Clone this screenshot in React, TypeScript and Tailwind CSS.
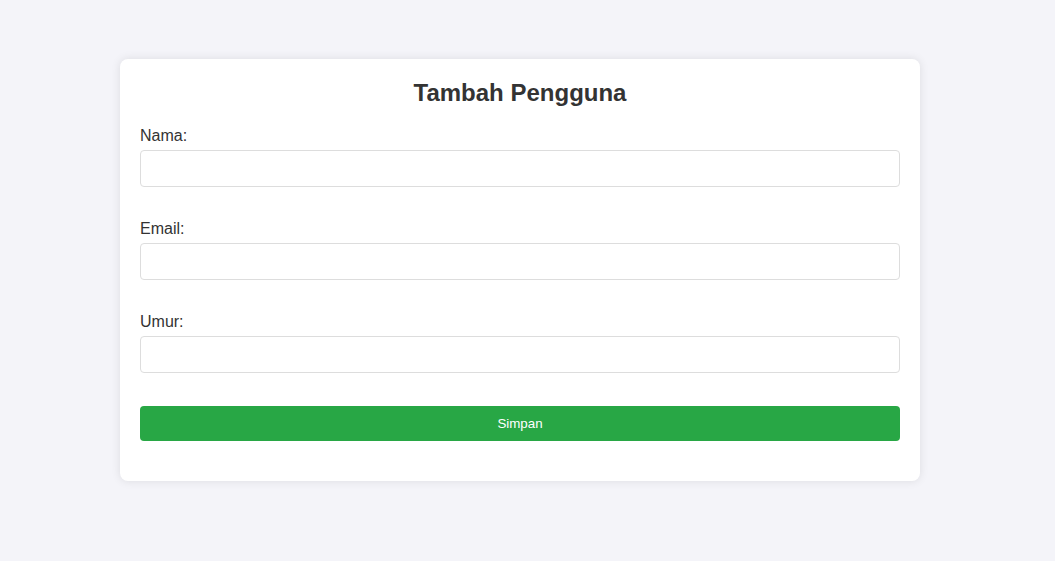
import React from "react";

function Field({ label, type = "text" }: { label: string; type?: string }) {
  return (
    <div className="mb-[33px]">
      <label className="block text-[16px] leading-[18px] text-[#333] mb-[5px]">{label}</label>
      <input
        type={type}
        className="block w-full h-[37px] px-[10px] border border-[#ddd] rounded-[4px] bg-white text-[16px] outline-none"
      />
    </div>
  );
}

export default function App() {
  return (
    <div
      className="min-h-[561px] w-full bg-[#f4f4f9] pt-[59px]"
      style={{ fontFamily: '"Liberation Sans", Arial, sans-serif' }}
    >
      <div className="ml-[120px] w-[800px] bg-white rounded-[8px] shadow-[0_0_10px_rgba(0,0,0,0.1)] px-[20px] pt-[20px] pb-[40px]">
        <h2 className="text-center text-[24px] leading-[28px] font-bold text-[#333] mb-[20px]">
          Tambah Pengguna
        </h2>
        <form onSubmit={(e) => e.preventDefault()}>
          <Field label="Nama:" />
          <Field label="Email:" type="email" />
          <Field label="Umur:" type="number" />
          <button
            type="submit"
            className="block w-full h-[35px] bg-[#28a745] text-white text-[13.33px] font-medium rounded-[4px]"
          >
            Simpan
          </button>
        </form>
      </div>
    </div>
  );
}
